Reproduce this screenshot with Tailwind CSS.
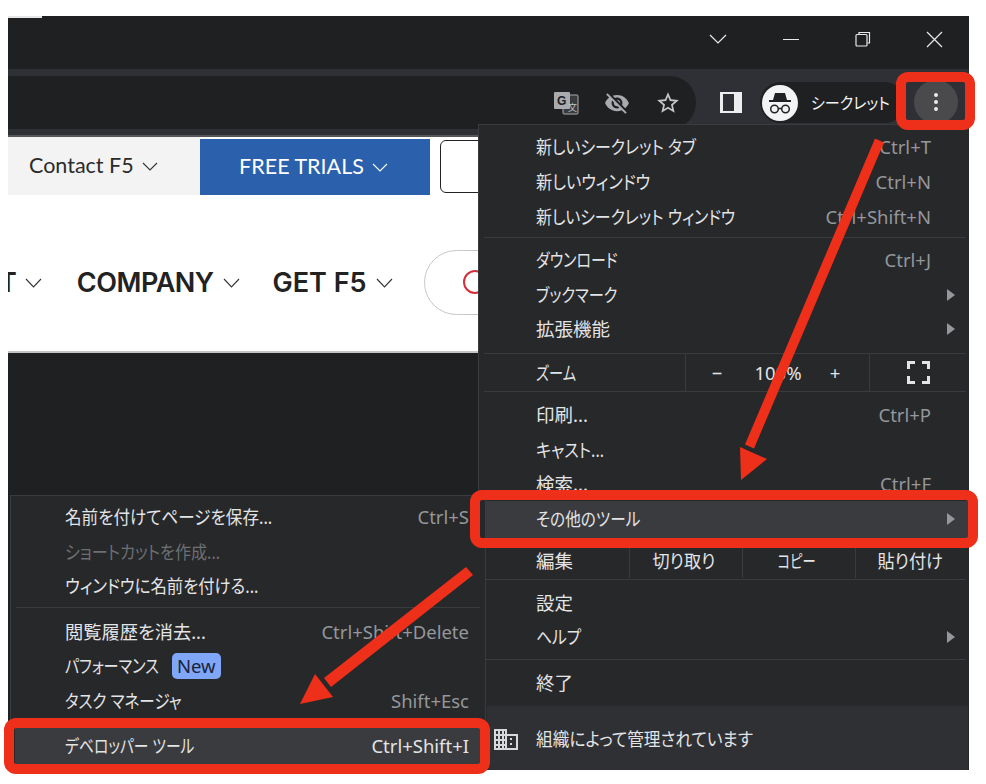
<!DOCTYPE html>
<html lang="ja">
<head>
  <meta charset="UTF-8">
  <title>Chrome menu</title>
  <script src="https://cdn.jsdelivr.net/npm/@tailwindcss/browser@4"></script>
</head>
<body class="bg-white">
  <div class="relative w-[986px] h-[784px] overflow-hidden bg-white font-['Noto_Sans','Noto_Sans_CJK_JP',sans-serif]">

    <!-- Browser window -->
    <div class="ml-2 pt-4 w-[961px] h-[770px] flex flex-col">
      <!-- Title bar -->
      <div class="relative h-[53px] shrink-0 bg-[#1f2022] flex items-center justify-end text-white">
        <div class="absolute left-0 top-0 w-[34px] h-[2px] bg-[#e6e6e6]"></div>
        <svg class="mr-[56px] mb-[7px]" width="18" height="10" viewBox="0 0 18 10" fill="none" stroke="#e8eaed" stroke-width="1.2"><path d="M1 1l8 8 8-8"/></svg>
        <div class="w-4 h-px bg-[#e8eaed] mr-[56px] mb-[7px]"></div>
        <svg class="mr-[55px] mb-[7px]" width="16" height="16" viewBox="0 0 16 16" fill="none" stroke="#e8eaed" stroke-width="1.2"><rect x="1" y="3.5" width="11" height="11.500" rx="1"/><path d="M4 3V1.500h10.500V12H12.500"/></svg>
        <svg class="mr-[26px] mb-[7px]" width="17" height="17" viewBox="0 0 17 17" fill="none" stroke="#e8eaed" stroke-width="1.2"><path d="M1 1l15 15M16 1L1 16"/></svg>
      </div>
      <!-- Toolbar -->
      <div class="h-[66px] shrink-0 bg-[#2f3035] flex items-start pt-[7px]">
        <div class="w-[688px] h-[53px] bg-[#1f2022] rounded-r-[26px] flex items-center justify-end pr-[15px] gap-[25px]">
          <svg width="26" height="24" viewBox="0 0 26 24">
            <rect x="10" y="4" width="15" height="19" rx="1" fill="#3a3b3e" stroke="#a9abae"/>
            <rect x="1" y="1" width="16" height="17" rx="1" fill="#a9abae"/>
            <text x="4" y="14" font-size="12" font-weight="700" fill="#202124" font-family="Liberation Sans">G</text>
            <text x="15" y="20" font-size="9" fill="#c4c6c9" font-family="Noto Sans CJK JP">文</text>
          </svg>
          <svg width="26" height="26" viewBox="0 0 24 24" fill="#a9abae"><path d="M12 7c2.76 0 5 2.240 5 5 0 .65-.13 1.260-.36 1.830l2.920 2.920c1.510-1.260 2.700-2.890 3.430-4.750-1.730-4.390-6-7.500-11-7.500-1.400 0-2.740.25-3.980.7l2.160 2.160C10.740 7.130 11.350 7 12 7zM2 4.270l2.280 2.280.46.46C3.080 8.300 1.780 10.020 1 12c1.730 4.390 6 7.500 11 7.500 1.550 0 3.030-.3 4.380-.84l.42.42L19.730 22 21 20.730 3.270 3 2 4.270zM7.530 9.800l1.550 1.550c-.05.21-.08.43-.08.65 0 1.660 1.340 3 3 3 .22 0 .44-.03.65-.08l1.550 1.550c-.67.33-1.410.53-2.200.53-2.760 0-5-2.240-5-5 0-.79.2-1.530.53-2.200zm4.310-.78l3.150 3.150.02-.16c0-1.660-1.340-3-3-3l-.17.01z"/></svg>
          <svg width="26" height="26" viewBox="0 0 24 24" fill="#c4c6c9"><path d="M22 9.240l-7.190-.62L12 2 9.190 8.630 2 9.240l5.460 4.730L5.820 21 12 17.270 18.180 21l-1.630-7.030L22 9.240zM12 15.400l-3.760 2.270 1-4.280-3.320-2.880 4.380-.38L12 6.100l1.710 4.040 4.380.38-3.320 2.880 1 4.280L12 15.400z"/></svg>
        </div>
        <div class="ml-[24px] mt-[16px] w-[22px] h-[21px] bg-[#eceef0] flex items-center justify-start pl-[3px]">
          <div class="w-[11px] h-[17px] bg-[#2f3035]"></div>
        </div>
        <div class="ml-[18px] mt-[6px] w-[145px] h-[41px] rounded-full bg-[#1f2022] flex items-center pl-[2px]">
          <div class="w-[36px] h-[36px] rounded-full bg-[#f1f3f4] flex items-center justify-center">
            <svg width="28" height="26" viewBox="0 0 28 26" fill="#202124">
              <path d="M9 3h10l2 7h4v2H3v-2h4z"/>
              <circle cx="8.500" cy="19" r="3.800" fill="none" stroke="#202124" stroke-width="1.500"/>
              <circle cx="19.500" cy="19" r="3.800" fill="none" stroke="#202124" stroke-width="1.500"/>
              <path d="M12.500 18.500h3" stroke="#202124" stroke-width="1.500"/>
            </svg>
          </div>
          <span class="ml-[13px] text-[16px] leading-none text-[#f1f3f4] origin-left scale-x-[0.94] [font-feature-settings:'palt'] whitespace-nowrap">シークレット</span>
        </div>
        <div class="ml-[9px] mt-[4px] w-[44px] h-[44px] rounded-full bg-[#4a4a4c] flex flex-col items-center justify-center gap-[3px]">
          <div class="w-1 h-1 rounded-full bg-[#e8eaed]"></div>
          <div class="w-1 h-1 rounded-full bg-[#e8eaed]"></div>
          <div class="w-1 h-1 rounded-full bg-[#e8eaed]"></div>
        </div>
      </div>

      <!-- Page -->
      <div class="h-[2px] shrink-0 bg-[#55565a]"></div>
      <div class="h-[58px] shrink-0 flex items-stretch bg-white font-['Lato',sans-serif]">
        <div class="w-[192px] bg-[#f3f3f3] flex items-center pl-[21px] pb-[2px] text-[21.500px] text-[#2b2b2b]">
          Contact F5
          <svg class="ml-2 mt-[2px]" width="16" height="9" viewBox="0 0 16 9" fill="none" stroke="#333" stroke-width="1.100"><path d="M1 1l7 7 7-7"/></svg>
        </div>
        <div class="w-[230px] mt-[2px] pr-[3px] bg-[#2b61ac] flex items-center justify-center pb-[2px] text-[21.500px] text-white">
          FREE TRIALS
          <svg class="ml-2 mt-[2px]" width="16" height="9" viewBox="0 0 16 9" fill="none" stroke="#fff" stroke-width="1.100"><path d="M1 1l7 7 7-7"/></svg>
        </div>
        <div class="ml-[10px] mt-[3px] mb-[2px] w-[100px] border border-[#222] rounded-l-[6px]"></div>
      </div>
      <div class="h-[158px] shrink-0 bg-white flex items-center pt-[18px] overflow-hidden border-b-2 border-[#c4c4c4] font-['Inter',sans-serif]">
        <span class="ml-[-9px] mt-[2px] text-[27px] font-semibold text-[#222]">T</span>
        <svg class="ml-[8px] mt-[2px]" width="17" height="10" viewBox="0 0 17 10" fill="none" stroke="#333" stroke-width="1.100"><path d="M1 1l7.500 8 7.500-8"/></svg>
        <span class="ml-[35px] mt-[2px] text-[27px] font-semibold text-[#222] tracking-[-0.5px]">COMPANY</span>
        <svg class="ml-[9px] mt-[2px]" width="17" height="10" viewBox="0 0 17 10" fill="none" stroke="#333" stroke-width="1.100"><path d="M1 1l7.500 8 7.500-8"/></svg>
        <span class="ml-[33px] mt-[2px] text-[27px] font-semibold text-[#222]">GET F5</span>
        <svg class="ml-[9px] mt-[2px]" width="17" height="10" viewBox="0 0 17 10" fill="none" stroke="#333" stroke-width="1.100"><path d="M1 1l7.500 8 7.500-8"/></svg>
        <div class="ml-[31px] w-[200px] h-[65px] shrink-0 border border-[#c8c8c8] rounded-full flex items-center pl-[38px]">
          <div class="w-[24px] h-[24px] shrink-0 rounded-full border-2 border-[#d3303c]"></div>
        </div>
      </div>
      <div class="flex-1 bg-[#1f2022]"></div>
    </div>

    <!-- Main menu -->
    <div class="absolute left-[478px] top-[124px] w-[491px] h-[646px] bg-[#27282a] border-l border-t border-[#3a3b3e] text-[18.500px] text-[#e3e4e6] [font-feature-settings:'palt'] flex flex-col">
      <div class="pt-[4px] pb-[3px]">
        <div class="h-[35px] flex items-center justify-between pl-[57px] pr-[38px]"><span class="origin-left scale-x-[0.86]">新しいシークレット タブ</span><span class="text-[#94979b]">Ctrl+T</span></div>
        <div class="h-[35px] flex items-center justify-between pl-[57px] pr-[38px]"><span class="origin-left scale-x-[0.877]">新しいウィンドウ</span><span class="text-[#94979b]">Ctrl+N</span></div>
        <div class="h-[35px] flex items-center justify-between pl-[57px] pr-[38px]"><span class="origin-left scale-x-[0.858]">新しいシークレット ウィンドウ</span><span class="text-[#94979b]">Ctrl+Shift+N</span></div>
      </div>
      <div class="h-px ml-[5px] mr-[3px] bg-[#3a3b3e]"></div>
      <div class="pt-[4px] pb-[7px]">
        <div class="h-[35px] flex items-center justify-between pl-[57px] pr-[38px]"><span class="origin-left scale-x-[0.81]">ダウンロード</span><span class="text-[#94979b]">Ctrl+J</span></div>
        <div class="h-[35px] flex items-center justify-between pl-[57px] pr-[14px]"><span class="origin-left scale-x-[0.825]">ブックマーク</span><svg width="8" height="12" viewBox="0 0 8 12" fill="#94979b"><path d="M0 0l8 6-8 6z"/></svg></div>
        <div class="h-[34px] flex items-center justify-between pl-[57px] pr-[14px]"><span>拡張機能</span><svg width="8" height="12" viewBox="0 0 8 12" fill="#94979b"><path d="M0 0l8 6-8 6z"/></svg></div>
      </div>
      <div class="h-px ml-[5px] mr-[3px] bg-[#3a3b3e]"></div>
      <div class="h-[37px] flex items-center pl-[57px]">
        <span class="w-[149px] origin-left scale-x-[0.77]">ズーム</span>
        <div class="w-[185px] h-full border-x border-[#3a3b3e] flex items-center">
          <span class="w-[62px] text-center">−</span>
          <span class="w-[60px] text-center">100%</span>
          <span class="w-[54px] text-center">+</span>
        </div>
        <svg class="ml-[37px]" width="23" height="23" viewBox="0 0 23 23" fill="none" stroke="#e3e4e6" stroke-width="3"><path d="M1.500 8V1.500H8M15 1.500h6.500V8M21.500 15v6.500H15M8 21.500H1.500V15"/></svg>
      </div>
      <div class="h-px ml-[5px] mr-[3px] bg-[#3a3b3e]"></div>
      <div class="pt-[6px]">
        <div class="h-[34.500px] flex items-center justify-between pl-[57px] pr-[38px]"><span>印刷...</span><span class="text-[#94979b]">Ctrl+P</span></div>
        <div class="h-[34.500px] flex items-center pl-[57px]"><span class="origin-left scale-x-[0.87]">キャスト...</span></div>
        <div class="h-[34.500px] flex items-center justify-between pl-[57px] pr-[38px]"><span>検索...</span><span class="text-[#94979b]">Ctrl+F</span></div>
        <div class="-mt-px h-[37px] bg-[#3a3b3e] flex items-center justify-between pl-[57px] pr-[14px]"><span class="origin-left scale-x-[0.845]">その他のツール</span><svg width="8" height="12" viewBox="0 0 8 12" fill="#94979b"><path d="M0 0l8 6-8 6z"/></svg></div>
      </div>
      <div class="h-[41px] pb-px flex items-end pl-[57px]">
        <span class="w-[93px] h-[34px] flex items-center">編集</span>
        <div class="w-[113px] h-[34px] pr-[4px] flex items-center justify-center border-l border-[#3a3b3e]"><span class="scale-x-[0.925]">切り取り</span></div>
        <div class="w-[113px] h-[34px] pr-[4px] flex items-center justify-center border-l border-[#3a3b3e]"><span class="scale-x-[0.72]">コピー</span></div>
        <div class="w-[113px] h-[34px] pr-[4px] flex items-center justify-center border-l border-[#3a3b3e]"><span class="scale-x-[0.93]">貼り付け</span></div>
      </div>
      <div class="h-px ml-[5px] mr-[3px] bg-[#3a3b3e]"></div>
      <div class="pt-[6px] pb-[5px]">
        <div class="h-[34px] flex items-center pl-[57px]"><span>設定</span></div>
        <div class="h-[34px] flex items-center justify-between pl-[57px] pr-[14px]"><span class="origin-left scale-x-[0.85]">ヘルプ</span><svg width="8" height="12" viewBox="0 0 8 12" fill="#94979b"><path d="M0 0l8 6-8 6z"/></svg></div>
      </div>
      <div class="h-px ml-[5px] mr-[3px] bg-[#3a3b3e]"></div>
      <div class="h-[46px] flex items-center pl-[57px]"><span>終了</span></div>
      <div class="flex-1 ml-[8px] mr-[1px] pt-[3px] bg-[#2f3033] flex items-center pl-[7px]">
        <svg width="24" height="21" viewBox="0 0 24 21" fill="#d7d8da"><path d="M0 0h13v5h11v16H0zM2 2v3h2V2zm4 0v3h2V2zm4 0v3h1V2zM2 7v3h2V7zm4 0v3h2V7zm4 0v3h1V7zM2 12v3h2v-3zm4 0v3h2v-3zm4 0v3h1v-3zM2 17v2h2v-2zm4 0v2h2v-2zm4 0v2h1v-2zM13 7v12h9V7zm3 2h2v2h-2zm0 5h2v2h-2z"/></svg>
        <span class="ml-[18px] origin-left scale-x-[0.9]">組織によって管理されています</span>
      </div>
    </div>

    <!-- More tools submenu -->
    <div class="absolute left-[10px] top-[495px] w-[476px] h-[275px] bg-[#27282a] border border-[#3a3b3e] text-[18.500px] text-[#e3e4e6] [font-feature-settings:'palt'] flex flex-col">
      <div class="pt-[4px] pb-[3px]">
        <div class="h-[34.500px] flex items-center justify-between pl-[54px] pr-[16px]"><span class="origin-left scale-x-[0.896]">名前を付けてページを保存...</span><span class="text-[#94979b]">Ctrl+S</span></div>
        <div class="h-[34.500px] flex items-center pl-[54px] text-[#6d6f73]"><span class="origin-left scale-x-[0.87]">ショートカットを作成...</span></div>
        <div class="h-[34.500px] flex items-center pl-[54px]"><span class="origin-left scale-x-[0.885]">ウィンドウに名前を付ける...</span></div>
      </div>
      <div class="h-px mx-[5px] bg-[#3a3b3e]"></div>
      <div class="pt-[7px]">
        <div class="h-[34.500px] flex items-center justify-between pl-[54px] pr-[16px]"><span class="origin-left scale-x-[0.985]">閲覧履歴を消去...</span><span class="text-[#94979b]">Ctrl+Shift+Delete</span></div>
        <div class="h-[34.500px] flex items-center pl-[54px]"><span class="w-[94px] whitespace-nowrap origin-left scale-x-[0.817]">パフォーマンス</span><span class="ml-[13px] h-[26px] px-[5px] rounded-[5px] bg-[#7fa6f7] text-[#1a2338] flex items-center">New</span></div>
        <div class="h-[34.500px] flex items-center justify-between pl-[54px] pr-[16px]"><span class="origin-left scale-x-[0.84]">タスク マネージャ</span><span class="text-[#94979b]">Shift+Esc</span></div>
      </div>
      <div class="mt-[10px] h-[36px] mx-[4px] bg-[#3a3b3e] flex items-center justify-between pl-[50px] pr-[12px]"><span class="origin-left scale-x-[0.8]">デベロッパー ツール</span><span>Ctrl+Shift+I</span></div>
    </div>

    <!-- Annotations drawn over the screenshot -->
    <div class="absolute left-[896px] top-[72px] w-[79px] h-[58px] border-[10px] border-[#ee2f1a] rounded-[12px]"></div>
    <div class="absolute left-[470px] top-[490px] w-[508px] h-[58px] border-[10px] border-[#ee2f1a] rounded-[12px]"></div>
    <div class="absolute left-[4px] top-[718px] w-[486px] h-[56px] border-[10px] border-[#ee2f1a] rounded-[12px]"></div>
    <svg class="absolute left-0 top-0" width="986" height="784" viewBox="0 0 986 784" fill="#ee2f1a">
      <path d="M875 138.500l9 4-130 306-9-4z"/>
      <path d="M741 480l-1-33 27 12z"/>
      <path d="M466 567l7 8-142 112-7-9z"/>
      <path d="M300 704l15-30 18 23z"/>
    </svg>
  </div>
</body>
</html>
